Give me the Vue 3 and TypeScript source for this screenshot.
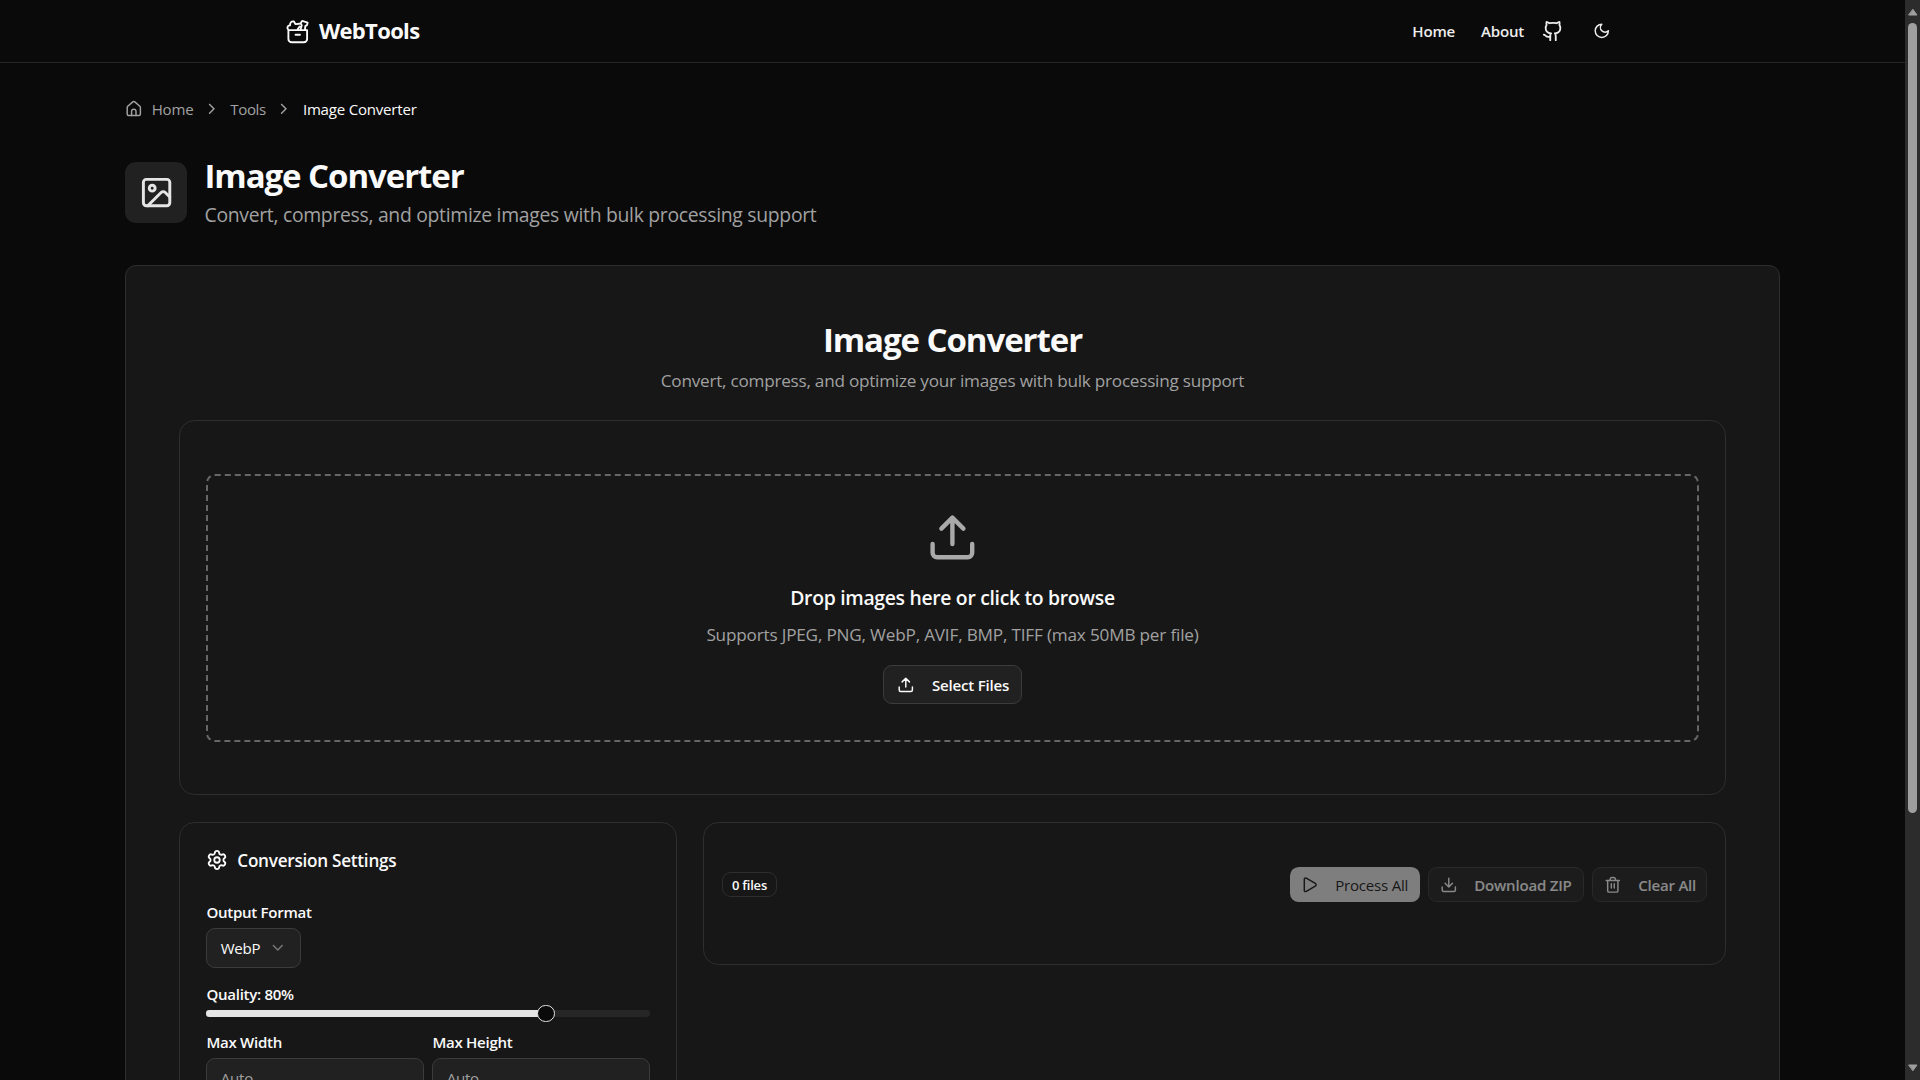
<script setup lang="ts">
import { computed, ref } from 'vue'

const quality = ref<number>(80)
const format = ref<string>('WebP')
const fileCount = ref<number>(0)

// Thumb centre as a share of the track; the scale runs from 15 to 100.
const thumbPosition = computed<number>(() => ((quality.value - 15) / 85) * 100 + 0.2)
</script>

<template>
  <div class="window">
    <div class="page">
      <header class="header">
        <div class="header-inner">
          <a class="brand">
            <svg class="i24" viewBox="0 0 24 24"><path d="M4 11h17v8a3 3 0 0 1-3 3H7a3 3 0 0 1-3-3zM10.5 15.2h4M4 10.8C2.4 9.2 3 6.8 5.5 6.6 5.3 4 7 2.6 9 3.2L10.5 5.6 14 5.2M12.300 10.500l1.900-2.800M15 10.800l1.100-4-.9-2.200 1.300-1.900 5 1.500-.5 2.200-1.600 1L19 10.800" /></svg>
            <span class="brand-name">WebTools</span>
          </a>
          <nav class="nav">
            <a class="nav-home">Home</a>
            <a class="nav-about">About</a>
            <svg class="i20" viewBox="0 0 24 24"><path d="M15 22v-4a4.800 4.800 0 0 0-1-3.500c3 0 6-2 6-5.500.08-1.250-.27-2.480-1-3.500.28-1.150.28-2.350 0-3.500 0 0-1 0-3 1.500-2.640-.5-5.360-.5-8 0C6 2 5 2 5 2c-.3 1.150-.3 2.350 0 3.500A5.403 5.403 0 0 0 4 9c0 3.500 3 5.500 6 5.500-.39.490-.68 1.050-.85 1.650-.17.600-.22 1.230-.15 1.850v4" /><path d="M9 18c-4.510 2-5-2-7-2" /></svg>
            <button class="theme"><svg class="i16" viewBox="0 0 24 24"><path d="M12 3a6 6 0 0 0 9 9 9 9 0 1 1-9-9Z" /></svg></button>
          </nav>
        </div>
      </header>

      <main class="main">
        <div class="crumbs">
          <svg class="i16" viewBox="0 0 24 24"><path d="M3 10.600c0-1 .4-1.900 1.200-2.500l6-5.200c1-.9 2.500-.9 3.600 0l6 5.200c.8.600 1.200 1.500 1.200 2.500V19a2 2 0 0 1-2 2H5a2 2 0 0 1-2-2z" /><path d="M9 21v-5.500a3 3 0 0 1 6 0V21" /></svg>
          <span class="c-home">Home</span>
          <svg class="i16 chev" viewBox="0 0 24 24"><path d="m9 18 6-6-6-6" /></svg>
          <span class="c-tools">Tools</span>
          <svg class="i16 chev" viewBox="0 0 24 24"><path d="m9 18 6-6-6-6" /></svg>
          <span class="c-current">Image Converter</span>
        </div>

        <div class="intro">
          <div class="intro-icon">
            <svg class="i32" viewBox="0 0 24 24"><rect x="3" y="3" width="18" height="18" rx="2" /><circle cx="9" cy="9" r="2" /><path d="m21 15-3.086-3.086a2 2 0 0 0-2.828 0L6 21" /></svg>
          </div>
          <div>
            <h1 class="title">Image Converter</h1>
            <p class="lead">Convert, compress, and optimize images with bulk processing support</p>
          </div>
        </div>

        <section class="tool">
          <div class="tool-head">
            <h2 class="title">Image Converter</h2>
            <p class="sub">Convert, compress, and optimize your images with bulk processing support</p>
          </div>

          <div class="card upload-card">
            <div class="drop">
              <svg class="i48" viewBox="0 0 24 24"><path d="M21 15v4a2 2 0 0 1-2 2H5a2 2 0 0 1-2-2v-4M17 8l-5-5-5 5M12 3v12" /></svg>
              <h3 class="drop-title">Drop images here or click to browse</h3>
              <p class="drop-text">Supports JPEG, PNG, WebP, AVIF, BMP, TIFF (max 50MB per file)</p>
              <button class="btn select">
                <svg class="i16" viewBox="0 0 24 24"><path d="M21 15v4a2 2 0 0 1-2 2H5a2 2 0 0 1-2-2v-4M17 8l-5-5-5 5M12 3v12" /></svg>
                <span>Select Files</span>
              </button>
            </div>
          </div>

          <div class="columns">
            <div class="card settings">
              <div class="settings-head">
                <svg class="i20" viewBox="0 0 24 24"><path d="M9.671 4.136a2.340 2.340 0 0 1 4.659 0 2.340 2.340 0 0 0 3.319 1.915 2.340 2.340 0 0 1 2.330 4.033 2.340 2.340 0 0 0 0 3.831 2.340 2.340 0 0 1-2.330 4.033 2.340 2.340 0 0 0-3.319 1.915 2.340 2.340 0 0 1-4.659 0 2.340 2.340 0 0 0-3.320-1.915 2.340 2.340 0 0 1-2.330-4.033 2.340 2.340 0 0 0 0-3.831A2.340 2.340 0 0 1 6.350 6.051a2.340 2.340 0 0 0 3.319-1.915" /><circle cx="12" cy="12" r="3" /></svg>
                <span>Conversion Settings</span>
              </div>
              <label class="label l-format">Output Format</label>
              <button class="dropdown">
                <span>{{ format }}</span>
                <svg class="i16" viewBox="0 0 24 24"><path d="m6 9 6 6 6-6" /></svg>
              </button>
              <label class="label l-quality">Quality: {{ quality }}%</label>
              <div class="slider">
                <div class="range" :style="{ width: thumbPosition + '%' }"></div>
                <div class="thumb" :style="{ left: thumbPosition + '%' }"></div>
              </div>
              <div class="dims">
                <div class="dim"><label class="label">Max Width</label><div class="field"><span>Auto</span></div></div>
                <div class="dim"><label class="label">Max Height</label><div class="field"><span>Auto</span></div></div>
              </div>
            </div>

            <div class="card files">
              <div class="badge"><span>{{ fileCount }} files</span></div>
              <div class="actions">
                <button class="btn sm primary">
                  <svg class="i16" viewBox="0 0 24 24"><path d="M4.500 4.500v15c0 1.700 1.400 2.200 2.700 1.500l12.300-7.200c1.400-.8 1.400-2.800 0-3.600L7.200 3C5.900 2.300 4.500 2.800 4.500 4.500z" /></svg>
                  <span>Process All</span>
                </button>
                <button class="btn sm zip">
                  <svg class="i16" viewBox="0 0 24 24"><path d="M21 15v4a2 2 0 0 1-2 2H5a2 2 0 0 1-2-2v-4M7 10l5 5 5-5M12 15V3" /></svg>
                  <span>Download ZIP</span>
                </button>
                <button class="btn sm clear">
                  <svg class="i16" viewBox="0 0 24 24"><path d="M3 6h18M19 6v14a2 2 0 0 1-2 2H7a2 2 0 0 1-2-2V6M8 6l.7-2.600A2 2 0 0 1 10.600 2h2.800a2 2 0 0 1 1.900 1.400L16 6M10 10.500v6M14 10.500v6" /></svg>
                  <span>Clear All</span>
                </button>
              </div>
            </div>
          </div>
        </section>
      </main>
    </div>

    <div class="scrollbar">
      <svg class="arrow" viewBox="0 0 10 8"><path d="M5 1.500 9 7H1z" /></svg>
      <div class="scroll-thumb"></div>
      <svg class="arrow down" viewBox="0 0 10 8"><path d="M5 6.500 9 1H1z" /></svg>
    </div>
  </div>
</template>

<style>
body { background: #0a0a0a; }
</style>

<style scoped>
.window { display: flex; height: 1080px; overflow: hidden; background: #0a0a0a; }
.window * { box-sizing: border-box; }
.page { zoom: 1.1; flex: 1; min-width: 0; font-family: "Open Sans", "Noto Sans", sans-serif; font-size: 13.7px; line-height: 20px; letter-spacing: -0.2px; color: #fafafa; }
h1, h2, h3, p { margin: 0; }
button { font: inherit; letter-spacing: inherit; color: inherit; background: none; border: 0; padding: 0; }
span, a, label, h1, h2, h3, p { white-space: nowrap; }
svg { flex: none; display: block; fill: none; stroke: currentColor; stroke-width: 2; stroke-linecap: round; stroke-linejoin: round; }
.i16 { width: 16px; height: 16px; }
.i20 { width: 20px; height: 20px; }
.i24 { width: 24px; height: 24px; stroke-width: 1.7; }
.i32 { width: 32px; height: 32px; }
.i48 { width: 48px; height: 48px; }

.header { height: 57px; border-bottom: 1px solid #262626; }
.header-inner { max-width: 1280px; height: 56px; margin: 0 auto; padding: 0 32px; display: flex; align-items: center; justify-content: space-between; }
.brand { display: flex; align-items: center; gap: 8px; }
.brand-name { font-size: 20px; line-height: 28px; font-weight: 700; letter-spacing: -0.6px; }
.nav { display: flex; align-items: center; font-weight: 600; color: #ededed; }
.nav-home, .nav-about { padding-top: 0.8px; }
.nav-home { width: 62.5px; }
.nav-about { width: 55.5px; }
.theme { width: 36px; height: 36px; margin-left: 16px; display: flex; align-items: center; justify-content: center; }

.main { max-width: 1536px; margin: 0 auto; padding: 32px 16px 0; }
.crumbs { display: flex; align-items: center; height: 20px; color: #a1a1a1; }
.crumbs span { padding-top: 0.8px; }
.crumbs .c-home { margin-left: 8px; width: 47.5px; }
.chev { margin: 0 9px 0 -1px; }
.c-tools { width: 42px; letter-spacing: -0.35px; }
.c-current { color: #fafafa; }

.intro { display: flex; align-items: center; gap: 16px; height: 68px; margin-top: 32px; }
.intro-icon { width: 56px; height: 56px; border-radius: 10px; background: #212121; color: #e5e5e5; display: flex; align-items: center; justify-content: center; }
.title { padding-top: 1px; font-size: 30px; line-height: 36px; font-weight: 700; letter-spacing: -0.97px; }
.lead { margin-top: 4px; font-size: 17.6px; line-height: 28px; letter-spacing: -0.27px; color: #a1a1a1; }

.tool { margin-top: 32px; height: 1000px; border: 1px solid #2e2e2e; border-radius: 10px; background: #171717; padding: 48px; }
.tool-head { text-align: center; }
.sub { font-size: 15.6px; line-height: 24px; letter-spacing: -0.22px; margin-top: 8px; color: #a1a1a1; }
.card { border: 1px solid #2e2e2e; border-radius: 14px; }
.upload-card { height: 341.3px; margin-top: 23px; padding: 48px 24px; }
.drop { height: 244px; border: 2px dashed #666; border-radius: 8px; display: flex; flex-direction: column; align-items: center; padding-top: 32px; color: #a9a9a9; }
.drop-title { margin-top: 17px; font-size: 17.6px; line-height: 28px; letter-spacing: -0.28px; font-weight: 600; color: #fafafa; }
.drop-text { margin-top: 7.7px; font-size: 15.6px; line-height: 24px; letter-spacing: -0.17px; color: #a1a1a1; }
.btn { display: flex; align-items: center; gap: 16px; height: 36px; padding-left: 12px; border: 1px solid #3c3c3c; border-radius: 8px; background: #212121; color: #fafafa; font-weight: 600; }
.btn span { padding-top: 0.8px; }
.select { width: 127px; height: 35.5px; margin-top: 15.3px; }

.columns { display: flex; align-items: flex-start; gap: 24px; margin-top: 24px; }
.settings { width: 452.67px; height: 500px; padding: 24px; }
.settings-head { display: flex; align-items: center; gap: 8px; height: 20px; font-size: 15.6px; font-weight: 600; letter-spacing: -0.24px; }
.settings-head span { padding-top: 1px; }
.label { display: block; height: 14px; line-height: 16px; font-weight: 600; letter-spacing: -0.27px; }
.l-format { margin-top: 29.7px; }
.dropdown { display: flex; align-items: center; justify-content: space-between; width: 86px; height: 36px; margin-top: 8px; padding: 0 12px; border: 1px solid #3c3c3c; border-radius: 8px; background: #212121; }
.dropdown svg { opacity: 0.4; }
.dropdown span { padding-top: 0.8px; }
.l-quality { margin-top: 16.5px; }
.slider { position: relative; height: 6px; margin-top: 8px; border-radius: 3px; background: #262626; }
.range { height: 6px; border-radius: 3px 0 0 3px; background: #e5e5e5; }
.thumb { position: absolute; top: -5px; width: 16px; height: 16px; margin-left: -8px; border: 1px solid #e5e5e5; border-radius: 50%; background: #0a0a0a; }
.dims { display: flex; gap: 8px; margin-top: 16px; }
.dim { flex: 1; }
.field { display: flex; align-items: center; height: 36px; margin-top: 8px; padding: 0 12px; border: 1px solid #3c3c3c; border-radius: 8px; background: #212121; color: #a1a1a1; }

.files { flex: 1; display: flex; align-items: center; justify-content: space-between; height: 129.8px; padding: 0 16px 16px; }
.badge { display: flex; align-items: center; justify-content: center; width: 50px; height: 22px; border: 1px solid #2e2e2e; border-radius: 8px; font-size: 11.8px; font-weight: 600; }
.badge span { padding-top: 1px; }
.actions { display: flex; gap: 8px; }
.sm { height: 32px; padding-left: 10px; gap: 14.7px; opacity: 0.5; }
.primary { width: 117.5px; border: 0; background: #e5e5e5; color: #171717; font-weight: 500; }
.zip { width: 141px; }
.clear { width: 104.5px; }

.scrollbar { width: 15px; height: 1080px; background: #2c2c2c; display: flex; flex-direction: column; align-items: center; padding: 8px 0; }
.arrow { width: 10px; height: 8px; fill: #9f9f9f; stroke: #9f9f9f; stroke-width: 1; }
.scroll-thumb { width: 9px; height: 790px; margin-top: 7px; border-radius: 5px; background: #9f9f9f; }
.down { margin-top: auto; }
</style>
